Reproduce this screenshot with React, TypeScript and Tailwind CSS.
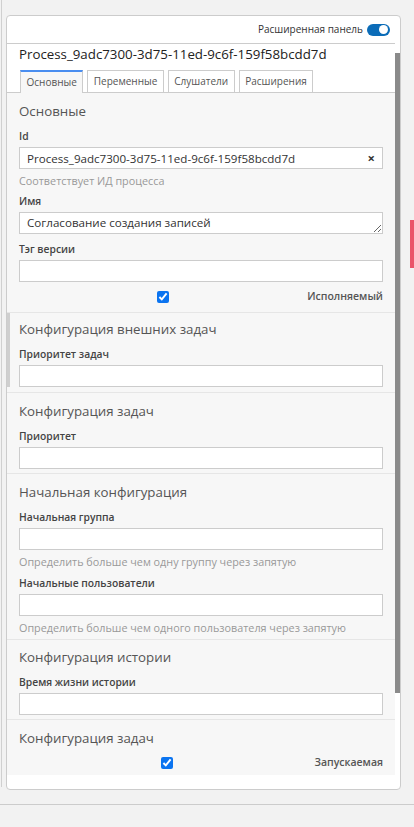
import React from "react";

const font = { fontFamily: '"Open Sans", "Noto Sans", sans-serif' };

function Label({ children }: { children: React.ReactNode }) {
  return <div className="text-[10.3px] leading-[15px] font-semibold text-[#444] mb-[3px]">{children}</div>;
}

function Hint({ children }: { children: React.ReactNode }) {
  return <div className="text-[10.8px] leading-[15px] text-[#999] mt-[4px]">{children}</div>;
}

function TextField({ label, value, hint, clear }: { label: string; value?: string; hint?: string; clear?: boolean }) {
  return (
    <div>
      <Label>{label}</Label>
      <div className="relative">
        <input
          readOnly
          value={value ?? ""}
          className="block w-full h-[22px] border border-[#ccc] bg-white px-[7px] text-[11.6px] text-[#333] outline-none"
        />
        {clear && (
          <span className="absolute right-[8px] top-[3px] text-[13px] leading-[16px] font-bold text-[#333]">×</span>
        )}
      </div>
      {hint && <Hint>{hint}</Hint>}
    </div>
  );
}

function Check({ label }: { label: string }) {
  return (
    <div className="flex items-center h-[20px]">
      <div className="flex-1 flex justify-center">
        <input type="checkbox" defaultChecked className="w-[12px] h-[12px] accent-[#0b74f0] m-0" />
      </div>
      <span className="text-[10.5px] text-[#555] font-semibold">{label}</span>
    </div>
  );
}

function GroupTitle({ children }: { children: React.ReactNode }) {
  return <div className="text-[13.3px] leading-[20px] text-[#555] mb-[8px]">{children}</div>;
}

export default function App() {
  const tabs = ["Основные", "Переменные", "Слушатели", "Расширения"];

  return (
    <div className="relative min-h-screen bg-[#f2f2f2]" style={font}>
      <div className="flex items-start h-[804px]">
        <div className="ml-px w-px h-[787px] bg-[#d0d0d0]" />
        <div className="ml-[4px] mt-[15px] w-[395px] h-[775px] bg-white border border-[#ccc] rounded-[4px] flex flex-col">
          {/* header */}
          <div className="h-[27px] flex items-center justify-end pr-[10px] gap-[4px]">
            <span className="text-[10px] text-[#333]">Расширенная панель</span>
            <div className="w-[23px] h-[12px] rounded-full bg-[#0b6cb8] flex items-center justify-end pr-[2px]">
              <div className="w-[9px] h-[9px] rounded-full bg-white" />
            </div>
          </div>

          <div className="flex flex-1 min-h-0">
            <div className="flex-1 border-t border-[#ccc] flex flex-col">
              <div className="pl-[12px] pt-[1px] h-[26px] text-[13.3px] leading-[18px] text-[#222]">
                Process_9adc7300-3d75-11ed-9c6f-159f58bcdd7d
              </div>

              {/* tabs */}
              <div className="flex gap-[4px] pl-[13px] border-b border-[#ccc]">
                {tabs.map((t, i) => (
                  <div
                    key={t}
                    className={
                      i === 0
                        ? "-mb-px h-[23px] px-[5.5px] flex items-center text-[10px] text-[#555] bg-[#f7f7f7] border-x border-[#ccc] border-t-2 border-t-[#4a8ef0]"
                        : "h-[22px] px-[5.5px] flex items-center text-[10px] text-[#555] bg-white border-x border-t border-[#ccc]"
                    }
                  >
                    {t}
                  </div>
                ))}
              </div>

              {/* content */}
              <div className="bg-[#f7f7f7] h-[682px]">
                <div className="px-[12px] pt-[8px] pb-[5px] border-b border-[#e6e6e6] flex flex-col">
                  <GroupTitle>Основные</GroupTitle>
                  <TextField label="Id" value="Process_9adc7300-3d75-11ed-9c6f-159f58bcdd7d" hint="Соответствует ИД процесса" clear />
                  <div className="mt-[6px]">
                    <Label>Имя</Label>
                    <textarea
                      readOnly
                      rows={1}
                      value="Согласование создания записей"
                      className="block w-full h-[22px] border border-[#ccc] bg-white px-[7px] py-[2px] text-[11.6px] leading-[16px] text-[#333] outline-none resize-y"
                    />
                  </div>
                  <div className="mt-[8px]">
                    <TextField label="Тэг версии" />
                  </div>
                  <div className="mt-[5px]">
                    <Check label="Исполняемый" />
                  </div>
                </div>

                <div className="pb-[5px] border-b border-[#e6e6e6]">
                  <div className="border-l-[3px] border-[#cfcfcf] pl-[9px] pr-[12px] pt-[6px]">
                    <GroupTitle>Конфигурация внешних задач</GroupTitle>
                    <TextField label="Приоритет задач" />
                  </div>
                </div>

                <div className="px-[12px] pt-[8px] pb-[4px] border-b border-[#e6e6e6]">
                  <GroupTitle>Конфигурация задач</GroupTitle>
                  <TextField label="Приоритет" />
                </div>

                <div className="px-[12px] pt-[8px] pb-[4px] border-b border-[#e6e6e6] flex flex-col gap-[7px]">
                  <div>
                    <GroupTitle>Начальная конфигурация</GroupTitle>
                    <TextField label="Начальная группа" hint="Определить больше чем одну группу через запятую" />
                  </div>
                  <TextField label="Начальные пользователи" hint="Определить больше чем одного пользователя через запятую" />
                </div>

                <div className="px-[12px] pt-[7px] pb-[4px] border-b border-[#e6e6e6]">
                  <GroupTitle>Конфигурация истории</GroupTitle>
                  <TextField label="Время жизни истории" />
                </div>

                <div className="px-[12px] pt-[8px]">
                  <div className="text-[13.3px] leading-[20px] text-[#555] mb-[5px]">Конфигурация задач</div>
                  <Check label="Запускаемая" />
                </div>
              </div>
            </div>
            <div className="w-[5px]">
              <div className="mt-[10px] h-[640px] bg-[#8a8a8a]" />
            </div>
          </div>
        </div>
      </div>
      <div className="border-t border-[#ccc]" />
      <div className="absolute right-0 top-[220px] w-[4px] h-[48px] bg-[#ea5369]" />
    </div>
  );
}
